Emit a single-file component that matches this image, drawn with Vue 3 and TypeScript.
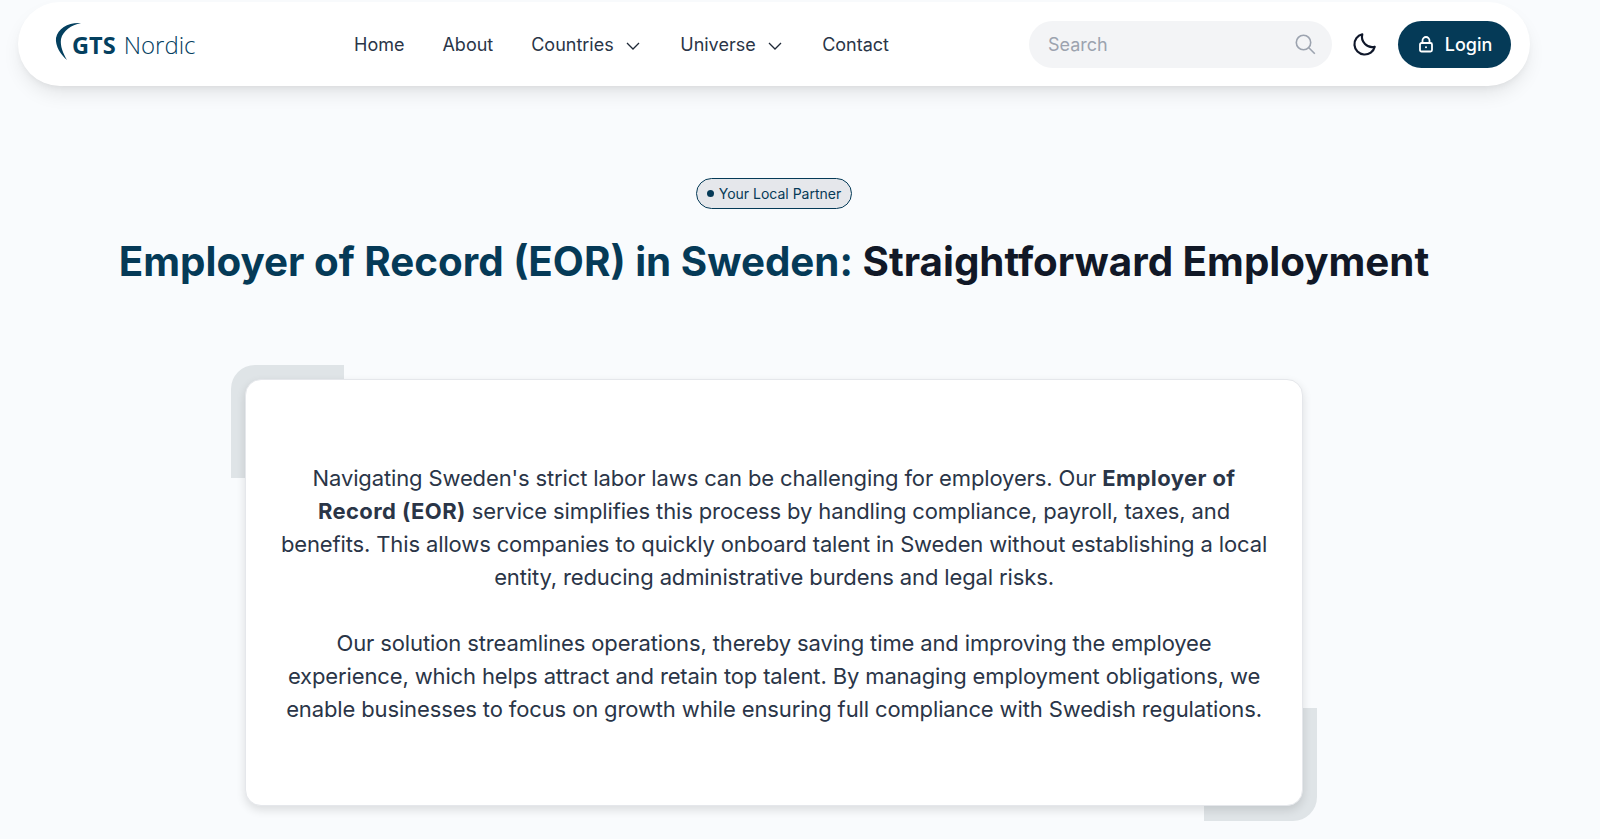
<template>
  <div class="page">
    <header class="navbar">
      <a class="logo">
        <svg class="logo-arc" width="26" height="40" viewBox="0 0 26 40">
          <path d="M26 1 C14 0 3 6 1 16 C0 24 6 33 12 38 C8 31 5 24 6 17 C8 9 16 3 26 1 Z" fill="#04405f" />
        </svg>
        <span class="logo-text"><b>GTS</b> <span class="logo-light">Nordic</span></span>
      </a>
      <nav class="links">
        <a>Home</a>
        <a>About</a>
        <a class="drop">Countries
          <svg width="18" height="18" viewBox="0 0 18 18"><path d="M3 6l6 6 6-6" fill="none" stroke="#1f2937" stroke-width="1.3" /></svg>
        </a>
        <a class="drop">Universe
          <svg width="18" height="18" viewBox="0 0 18 18"><path d="M3 6l6 6 6-6" fill="none" stroke="#1f2937" stroke-width="1.3" /></svg>
        </a>
        <a>Contact</a>
      </nav>
      <div class="actions">
        <div class="search">
          <span class="placeholder">Search</span>
          <svg width="22" height="22" viewBox="0 0 22 22" fill="none" stroke="#9ca3af" stroke-width="1.6">
            <circle cx="9.5" cy="9.5" r="7.2" />
            <path d="M14.8 14.8l6 6" />
          </svg>
        </div>
        <svg class="moon" width="26" height="26" viewBox="0 0 24 24" fill="none" stroke="#0f172a" stroke-width="2" stroke-linejoin="round">
          <path d="M21 14.5A9.5 9.5 0 0 1 9.5 3a9.5 9.5 0 1 0 11.5 11.5z" />
        </svg>
        <button class="login">
          <svg width="18" height="18" viewBox="0 0 18 18" fill="none" stroke="#fff" stroke-width="1.8">
            <rect x="3" y="8" width="12" height="8.5" rx="1.5" />
            <path d="M5.5 8V5.5a3.5 3.5 0 0 1 7 0V8" />
            <circle cx="9" cy="12.2" r="1" fill="#fff" stroke="none" />
          </svg>
          Login
        </button>
      </div>
    </header>

    <section class="hero">
      <div class="badge"><i></i>Your Local Partner</div>
      <h1><span>Employer of Record (EOR) in Sweden:</span> Straightforward Employment</h1>

      <div class="card-wrap">
        <div class="corner tl"></div>
        <div class="corner br"></div>
        <div class="card">
          <p>Navigating Sweden's strict labor laws can be challenging for employers. Our <b>Employer of Record (EOR)</b> service simplifies this process by handling compliance, payroll, taxes, and benefits. This allows companies to quickly onboard talent in Sweden without establishing a local entity, reducing administrative burdens and legal risks.</p>
          <p>Our solution streamlines operations, thereby saving time and improving the employee experience, which helps attract and retain top talent. By managing employment obligations, we enable businesses to focus on growth while ensuring full compliance with Swedish regulations.</p>
        </div>
      </div>
    </section>
  </div>
</template>

<script setup lang="ts">
</script>

<style>
html,
body {
  background: #f9fbfd;
  overflow: hidden;
}
</style>

<style scoped>
.page {
  width: 1548px;
  height: 839px;
  padding: 2px 18px 0;
  box-sizing: border-box;
  font-family: Inter, "Liberation Sans", sans-serif;
  color: #2a3547;
}
.navbar {
  height: 84px;
  background: #fff;
  border-radius: 42px;
  box-shadow: 0 10px 20px -4px rgba(0, 0, 0, 0.1), 0 4px 8px -4px rgba(0, 0, 0, 0.08);
  display: flex;
  align-items: center;
  padding: 0 19px 0 37px;
}
.logo {
  display: flex;
  align-items: center;
  width: 299px;
}
.logo-arc {
  margin-top: -4px;
  flex: none;
}
.logo-text {
  font-family: "Open Sans", "Noto Sans", sans-serif;
  font-size: 23.5px;
  font-weight: 300;
  color: #04405f;
  margin-left: -9px;
  white-space: nowrap;
}
.logo-text b {
  font-weight: 700;
}
.logo-light {
  font-size: 24px;
  margin-left: 2px;
}
.links {
  display: flex;
  align-items: center;
  gap: 38px;
  font-size: 18px;
  flex: 1;
}
.links a {
  display: flex;
  align-items: center;
  gap: 10.5px;
  white-space: nowrap;
}
.links .drop svg {
  margin-top: 3px;
}
.actions {
  display: flex;
  align-items: center;
}
.search {
  width: 303px;
  height: 47px;
  border-radius: 24px;
  background: #f3f4f6;
  box-sizing: border-box;
  padding: 0 16px 0 19px;
  display: flex;
  align-items: center;
  justify-content: space-between;
  color: #9ca3af;
  font-size: 18px;
}
.moon {
  margin: 0 20px 0 20px;
}
.login {
  width: 113px;
  height: 47px;
  border: none;
  border-radius: 24px;
  background: #053a57;
  color: #fff;
  font-family: inherit;
  font-size: 18px;
  font-weight: 500;
  display: flex;
  align-items: center;
  justify-content: center;
  gap: 10px;
}
.hero {
  display: flex;
  flex-direction: column;
  align-items: center;
}
.badge {
  margin-top: 92px;
  height: 31px;
  box-sizing: border-box;
  padding: 0 10px;
  border: 1px solid #053a57;
  border-radius: 16px;
  background: #e5e7eb;
  color: #053a57;
  font-size: 14px;
  display: flex;
  align-items: center;
  gap: 5px;
}
.badge i {
  width: 7px;
  height: 7px;
  border-radius: 50%;
  background: #053a57;
}
h1 {
  margin: 29px 0 0;
  font-size: 40.35px;
  line-height: 48px;
  font-weight: 700;
  color: #111827;
  white-space: nowrap;
}
h1 span {
  color: #053a57;
}
.card-wrap {
  position: relative;
  margin-top: 93px;
  width: 1058px;
}
.corner {
  position: absolute;
  width: 113px;
  height: 113px;
  background: #dfe4e7;
}
.corner.tl {
  left: -14px;
  top: -14px;
  border-top-left-radius: 24px;
}
.corner.br {
  right: -14px;
  bottom: -15px;
  border-bottom-right-radius: 24px;
}
.card {
  position: relative;
  height: 427px;
  box-sizing: border-box;
  background: #fff;
  border: 1px solid #e5e7eb;
  border-radius: 16px;
  box-shadow: 0 4px 10px rgba(0, 0, 0, 0.12);
  padding: 82px 32px 0;
  text-align: center;
  font-size: 22px;
  line-height: 33px;
  letter-spacing: -0.13px;
}
.card p {
  margin: 0 0 33px;
}
.card b {
  font-weight: 700;
  letter-spacing: 0.4px;
}
</style>
